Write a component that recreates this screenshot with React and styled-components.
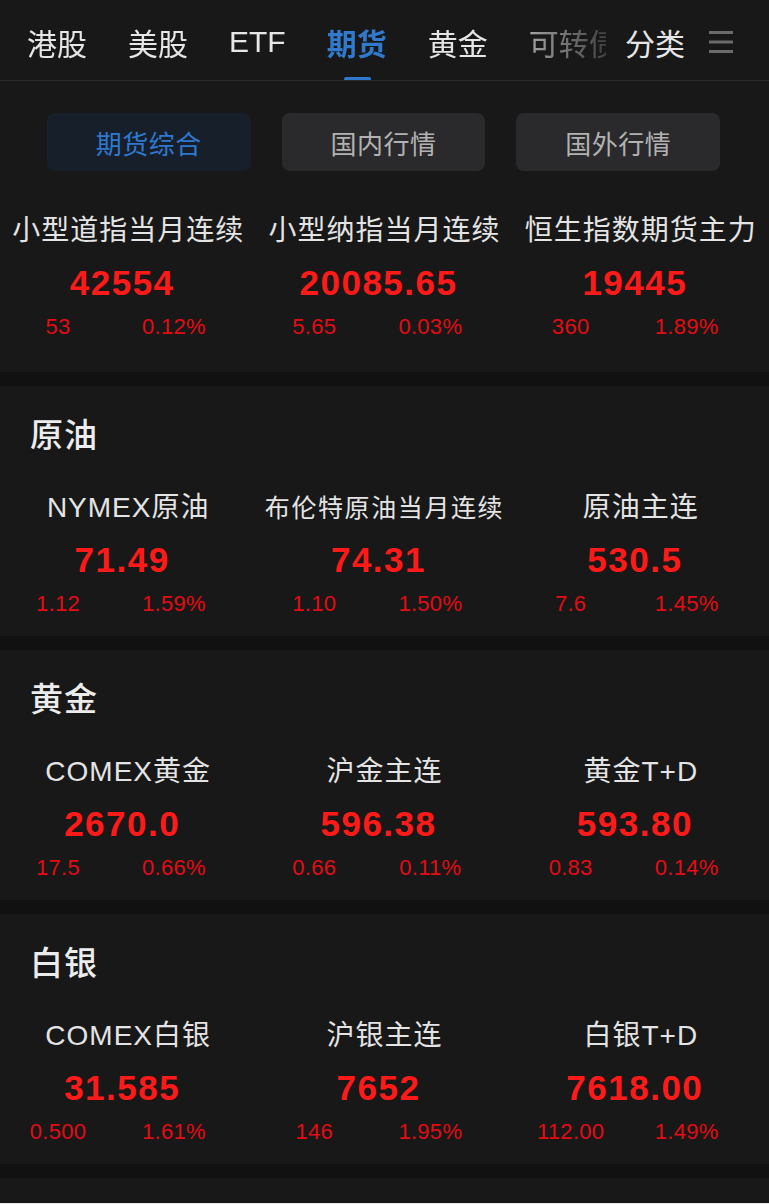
import React from "react";
import styled, { createGlobalStyle } from "styled-components";

const Global = createGlobalStyle`
  html, body { margin: 0; padding: 0; background: #e9e9e9; }
  body { font-family: "Liberation Sans", "Noto Sans CJK SC", sans-serif; }
  * { box-sizing: border-box; }
`;

const Page = styled.div`
  width: 769px;
  background: #181818;
  display: flex;
  flex-direction: column;
  overflow: hidden;
`;

const Header = styled.div`
  height: 81px;
  display: flex;
  align-items: stretch;
  border-bottom: 1px solid #2a2a2a;
`;

const TabScroller = styled.div`
  flex: 0 0 606px;
  display: flex;
  gap: 41px;
  padding-left: 27px;
  overflow: hidden;
  white-space: nowrap;
  -webkit-mask-image: linear-gradient(to right, #000 0, #000 490px, rgba(0,0,0,0.6) 540px, rgba(0,0,0,0.2) 606px);
  mask-image: linear-gradient(to right, #000 0, #000 490px, rgba(0,0,0,0.6) 540px, rgba(0,0,0,0.2) 606px);
`;

const Tab = styled.div`
  position: relative;
  flex: 0 0 auto;
  display: flex;
  align-items: center;
  padding-top: 4px;
  font-size: 30px;
  font-weight: ${(p) => (p.$active ? 600 : 400)};
  color: ${(p) => (p.$active ? "#3079cc" : "#e6e6e6")};
`;

const Underline = styled.span`
  position: absolute;
  left: 50%;
  bottom: -1px;
  width: 27px;
  height: 4px;
  margin-left: -13px;
  border-radius: 2px;
  background: #2f78cf;
`;

const FixedTab = styled(Tab)`
  margin-left: 19px;
`;

const MenuButton = styled.div`
  display: flex;
  align-items: center;
  padding-top: 4px;
  margin-left: 24px;
`;

const TopSection = styled.section`
  padding: 32px 0 30px;
`;

const Segments = styled.div`
  display: flex;
  gap: 31px;
  padding: 0 49px 0 47px;
  margin-bottom: 40px;
`;

const Segment = styled.div`
  flex: 1;
  height: 58px;
  border-radius: 8px;
  display: flex;
  align-items: center;
  justify-content: center;
  font-size: 26px;
  letter-spacing: 0.5px;
  background: ${(p) => (p.$active ? "#17202a" : "#2a2a2c")};
  color: ${(p) => (p.$active ? "#2f78cf" : "#b2b2b2")};
`;

const Band = styled.div`
  height: 14px;
  background: #111111;
`;

const Section = styled.section`
  padding: 28px 0 17px;
`;

const SectionTitle = styled.h2`
  margin: 0 0 30px;
  padding-left: 30px;
  height: 44px;
  line-height: 44px;
  font-size: 33px;
  font-weight: 500;
  letter-spacing: 1px;
  color: #ececec;
`;

const Grid = styled.div`
  display: grid;
  grid-template-columns: repeat(3, 1fr);
`;

const Quote = styled.div`
  display: flex;
  flex-direction: column;
  align-items: stretch;
`;

const Name = styled.div`
  height: 40px;
  line-height: 40px;
  text-align: center;
  white-space: nowrap;
  font-size: ${(p) => (p.$small ? "25px" : "28px")};
  letter-spacing: ${(p) => (p.$small ? "1.6px" : "1px")};
  color: #e4e4e4;
`;

const Price = styled.div`
  margin-top: 10px;
  height: 44px;
  line-height: 44px;
  padding-right: 12px;
  text-align: center;
  font-size: 35px;
  font-weight: 700;
  letter-spacing: 1.5px;
  color: #ff1a1a;
`;

const Changes = styled.div`
  margin-top: 7px;
  width: 232px;
  display: grid;
  grid-template-columns: 1fr 1fr;
`;

const Change = styled.span`
  height: 30px;
  line-height: 30px;
  text-align: center;
  font-size: 22px;
  letter-spacing: 0.3px;
  color: #e30c14;
`;

const Footer = styled.div`
  height: 25px;
`;

const tabs = ["港股", "美股", "ETF", "期货", "黄金", "可转债"];

const top = [
  { name: "小型道指当月连续", price: "42554", chg: "53", pct: "0.12%" },
  { name: "小型纳指当月连续", price: "20085.65", chg: "5.65", pct: "0.03%" },
  { name: "恒生指数期货主力", price: "19445", chg: "360", pct: "1.89%" },
];

const sections = [
  {
    title: "原油",
    items: [
      { name: "NYMEX原油", price: "71.49", chg: "1.12", pct: "1.59%" },
      { name: "布伦特原油当月连续", price: "74.31", chg: "1.10", pct: "1.50%", small: true },
      { name: "原油主连", price: "530.5", chg: "7.6", pct: "1.45%" },
    ],
  },
  {
    title: "黄金",
    items: [
      { name: "COMEX黄金", price: "2670.0", chg: "17.5", pct: "0.66%" },
      { name: "沪金主连", price: "596.38", chg: "0.66", pct: "0.11%" },
      { name: "黄金T+D", price: "593.80", chg: "0.83", pct: "0.14%" },
    ],
  },
  {
    title: "白银",
    items: [
      { name: "COMEX白银", price: "31.585", chg: "0.500", pct: "1.61%" },
      { name: "沪银主连", price: "7652", chg: "146", pct: "1.95%" },
      { name: "白银T+D", price: "7618.00", chg: "112.00", pct: "1.49%" },
    ],
  },
];

function QuoteGrid({ items }) {
  return (
    <Grid>
      {items.map((q) => (
        <Quote key={q.name}>
          <Name $small={q.small}>{q.name}</Name>
          <Price>{q.price}</Price>
          <Changes>
            <Change>{q.chg}</Change>
            <Change>{q.pct}</Change>
          </Changes>
        </Quote>
      ))}
    </Grid>
  );
}

export default function App() {
  return (
    <>
      <Global />
      <Page>
        <Header>
          <TabScroller>
            {tabs.map((t) => (
              <Tab key={t} $active={t === "期货"}>
                {t}
                {t === "期货" && <Underline />}
              </Tab>
            ))}
          </TabScroller>
          <FixedTab>分类</FixedTab>
          <MenuButton>
            <svg width="24" height="24" viewBox="0 0 24 24">
              <rect x="0" y="1" width="24" height="3" fill="#6b6b6b" />
              <rect x="0" y="10.5" width="24" height="3" fill="#6b6b6b" />
              <rect x="0" y="20" width="24" height="3" fill="#6b6b6b" />
            </svg>
          </MenuButton>
        </Header>
        <TopSection>
          <Segments>
            <Segment $active>期货综合</Segment>
            <Segment>国内行情</Segment>
            <Segment>国外行情</Segment>
          </Segments>
          <QuoteGrid items={top} />
        </TopSection>
        {sections.map((s) => (
          <React.Fragment key={s.title}>
            <Band />
            <Section>
              <SectionTitle>{s.title}</SectionTitle>
              <QuoteGrid items={s.items} />
            </Section>
          </React.Fragment>
        ))}
        <Band />
        <Footer />
      </Page>
    </>
  );
}
